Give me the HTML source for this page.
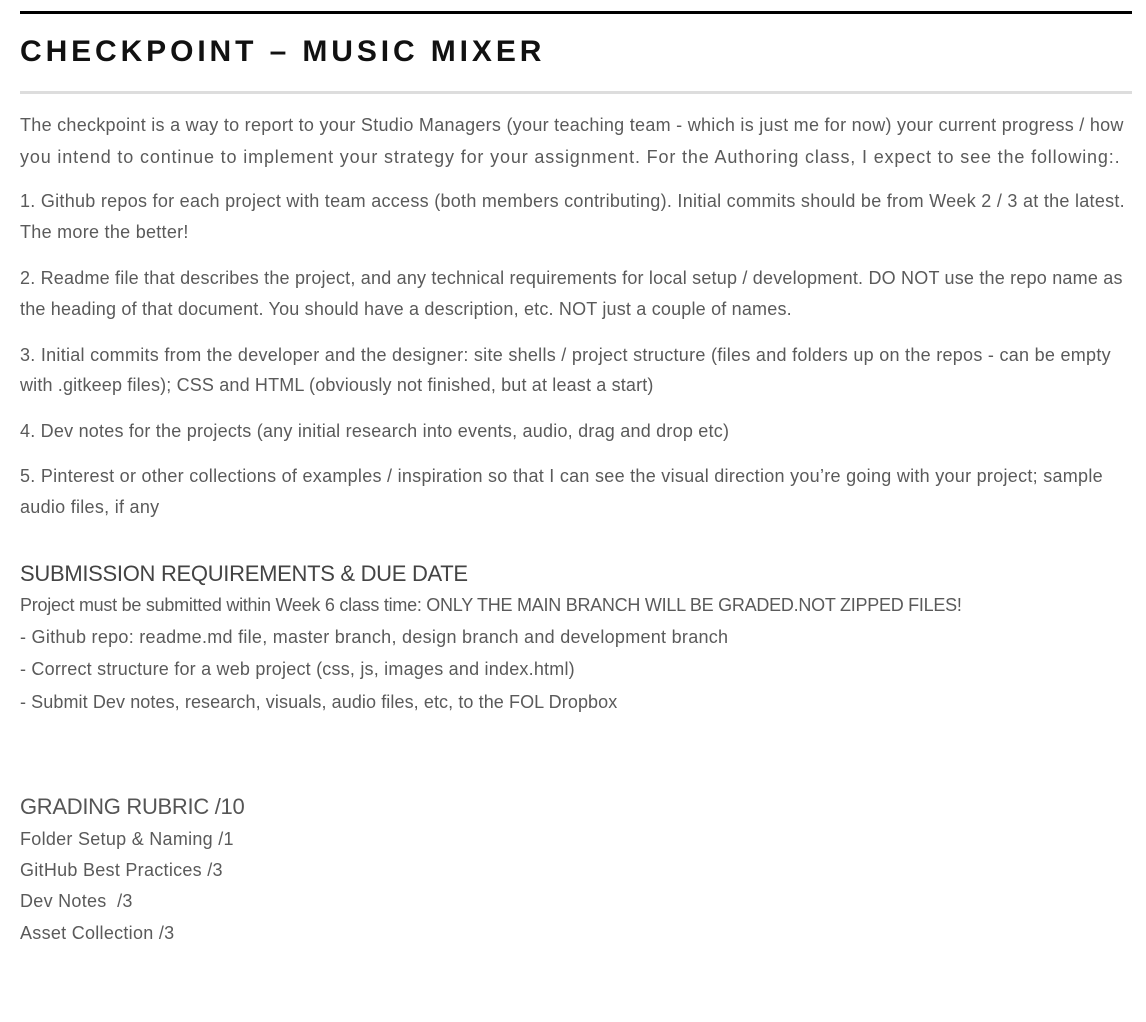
<!DOCTYPE html>
<html><head><meta charset="utf-8"><style>
html,body{margin:0;padding:0;background:#fff;width:1146px;height:1022px;overflow:hidden;position:relative}
.l{position:absolute;left:20px;white-space:nowrap;font-family:"Liberation Sans",sans-serif;font-size:18px;line-height:20px;color:#5a5a5a;letter-spacing:0.28px}
.h{position:absolute;left:20px;white-space:nowrap;font-family:"Liberation Sans",sans-serif;font-size:22px;line-height:26px;color:#444;letter-spacing:-0.3px}
.t{position:absolute;left:20px;top:34px;font-family:"Liberation Sans",sans-serif;font-weight:bold;font-size:30px;line-height:36px;letter-spacing:3.9px;color:#111}
</style></head><body>
<div style="position:absolute;left:20px;top:11px;width:1112px;height:3px;background:#000"></div>
<div class="t">CHECKPOINT – MUSIC MIXER</div>
<div style="position:absolute;left:20px;top:91px;width:1112px;height:3px;background:#ddd"></div>
<div class="l" style="top:115px">The checkpoint is a way to report to your Studio Managers (your teaching team - which is just me for now) your current progress / how</div>
<div class="l" style="top:147px;letter-spacing:0.85px">you intend to continue to implement your strategy for your assignment. For the Authoring class, I expect to see the following:.</div>
<div class="l" style="top:191px">1. Github repos for each project with team access (both members contributing). Initial commits should be from Week 2 / 3 at the latest.</div>
<div class="l" style="top:222px">The more the better!</div>
<div class="l" style="top:268px;letter-spacing:0.2px">2. Readme file that describes the project, and any technical requirements for local setup / development. DO NOT use the repo name as</div>
<div class="l" style="top:299px;letter-spacing:0.19px">the heading of that document. You should have a description, etc. NOT just a couple of names.</div>
<div class="l" style="top:345px">3. Initial commits from the developer and the designer: site shells / project structure (files and folders up on the repos - can be empty</div>
<div class="l" style="top:375px;letter-spacing:0.16px">with .gitkeep files); CSS and HTML (obviously not finished, but at least a start)</div>
<div class="l" style="top:421px;letter-spacing:0.22px">4. Dev notes for the projects (any initial research into events, audio, drag and drop etc)</div>
<div class="l" style="top:466px">5. Pinterest or other collections of examples / inspiration so that I can see the visual direction you’re going with your project; sample</div>
<div class="l" style="top:497px">audio files, if any</div>
<div class="h" style="top:561px">SUBMISSION REQUIREMENTS &amp; DUE DATE</div>
<div class="l" style="top:595px;letter-spacing:-0.26px">Project must be submitted within Week 6 class time: ONLY THE MAIN BRANCH WILL BE GRADED.NOT ZIPPED FILES!</div>
<div class="l" style="top:627px">- Github repo: readme.md file, master branch, design branch and development branch</div>
<div class="l" style="top:659px;letter-spacing:0.21px">- Correct structure for a web project (css, js, images and index.html)</div>
<div class="l" style="top:692px;letter-spacing:0.09px">- Submit Dev notes, research, visuals, audio files, etc, to the FOL Dropbox</div>
<div class="h" style="top:794px;color:#555">GRADING RUBRIC /10</div>
<div class="l" style="top:829px">Folder Setup &amp; Naming /1</div>
<div class="l" style="top:860px">GitHub Best Practices /3</div>
<div class="l" style="top:891px">Dev Notes&nbsp; /3</div>
<div class="l" style="top:923px">Asset Collection /3</div>
</body></html>
